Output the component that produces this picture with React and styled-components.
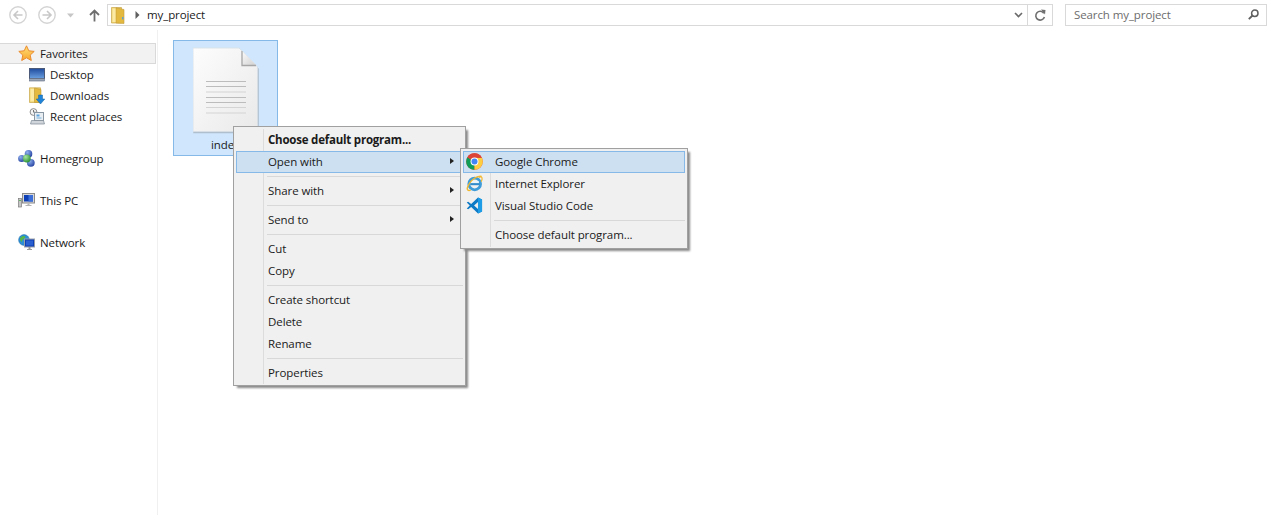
import React from "react";
import styled, { createGlobalStyle } from "styled-components";

const Global = createGlobalStyle`
  html, body { margin: 0; padding: 0; background: #fff; overflow: hidden; }
  body { font-family: "Open Sans", "Noto Sans", "Liberation Sans", sans-serif; font-size: 11.5px; color: #1a1a1a; letter-spacing: -0.1px; }
  * { box-sizing: border-box; }
`;

const Window = styled.div`
  width: 1278px;
  height: 515px;
  display: flex;
  flex-direction: column;
  overflow: hidden;
`;
const Toolbar = styled.div`
  height: 30px;
  flex: none;
  display: flex;
  align-items: flex-start;
  padding: 4px 11px 0 9px;
`;
const NavIcons = styled.div`
  display: flex;
  align-items: center;
  width: 98px;
  height: 22px;
  flex: none;
`;
const NavSlot = styled.span`
  width: ${p => p.$w}px;
  flex: none;
  display: flex;
  align-items: center;
`;
const AddressBar = styled.div`
  width: 946px;
  height: 22px;
  flex: none;
  border: 1px solid #d9d9d9;
  display: flex;
  align-items: center;
`;
const Crumb = styled.span`
  margin-left: 7px;
  flex: 1;
  line-height: 20px;
`;
const AddressEnd = styled.div`
  width: 25px;
  height: 20px;
  flex: none;
  border-left: 1px solid #d9d9d9;
  display: flex;
  align-items: center;
  justify-content: center;
`;
const SearchBox = styled.div`
  width: 202px;
  height: 22px;
  flex: none;
  margin-left: 12px;
  border: 1px solid #d9d9d9;
  display: flex;
  align-items: center;
  justify-content: space-between;
  padding: 0 7px 2px 8px;
  color: #6d6d6d;
`;
const Body = styled.div`
  flex: 1;
  display: flex;
  min-height: 0;
`;
const Sidebar = styled.nav`
  width: 158px;
  flex: none;
  border-right: 1px solid #f0f0f0;
  padding-top: 13px;
  display: flex;
  flex-direction: column;
  gap: 21px;
`;
const NavGroup = styled.div`
  display: flex;
  flex-direction: column;
`;
const NavRow = styled.div`
  height: 21px;
  width: 156px;
  display: flex;
  align-items: center;
  padding-left: ${p => (p.$sub ? 29 : 18)}px;
  background: ${p => (p.$active ? "#f2f2f2" : "transparent")};
  border: 1px solid ${p => (p.$active ? "#d9d9d9" : "transparent")};
  border-left: 0;
  white-space: nowrap;
`;
const NavIconBox = styled.span`
  width: ${p => (p.$sub ? 21 : 22)}px;
  flex: none;
  display: flex;
  align-items: center;
`;
const Content = styled.main`
  flex: 1;
  position: relative;
  padding: 10px 15px;
`;
const FileTile = styled.div`
  width: 105px;
  height: 116px;
  background: #cfe6fc;
  border: 1px solid #84b9e8;
  display: flex;
  flex-direction: column;
  align-items: center;
  padding-top: 6px;
  gap: 3px;
`;
const FileName = styled.span`
  line-height: 16px;
`;
const Menu = styled.div`
  position: absolute;
  left: ${p => p.$left}px;
  top: ${p => p.$top}px;
  width: ${p => p.$width}px;
  background: #f0f0f0;
  border: 1px solid #a0a0a0;
  box-shadow: 3px 3px 2px -1px #8a8a8a;
  padding: 2px 2px ${p => p.$bottom}px;
  z-index: ${p => p.$z};
`;
const Gutter = styled.div`
  position: absolute;
  top: 2px;
  bottom: 1px;
  left: 29px;
  width: 1px;
  background: #dcdcdc;
`;
const Item = styled.div`
  height: 22px;
  position: relative;
  display: flex;
  align-items: center;
  padding: 0 0 2px 32px;
  font-weight: ${p => (p.$bold ? 700 : 400)};
  letter-spacing: ${p => (p.$bold ? "-0.22px" : "-0.08px")};
  white-space: nowrap;
  background: ${p => (p.$hover ? "#cde0f1" : "transparent")};
  box-shadow: ${p => (p.$hover ? "inset 0 0 0 1px #86b8e8" : "none")};
`;
const ItemIcon = styled.span`
  position: absolute;
  left: 3px;
  top: 2px;
  width: 17px;
  height: 17px;
  display: flex;
`;
const Caret = styled.span`
  position: absolute;
  right: 9px;
  top: 7px;
  width: 0;
  height: 0;
  border-left: 4px solid #222;
  border-top: 3.5px solid transparent;
  border-bottom: 3.5px solid transparent;
`;
const Sep = styled.div`
  height: 7px;
  position: relative;
  margin-left: 31px;
  &::after {
    content: "";
    position: absolute;
    left: 0;
    right: 0;
    top: 3px;
    height: 1px;
    background: #d8d8d8;
  }
`;
const Glyph = styled.svg`
  flex: none;
  margin-left: ${p => p.$ml || 0}px;
  margin-right: ${p => p.$mr || 0}px;
`;

const Star = () => (
  <Glyph width="17" height="17" viewBox="0 0 17 17">
    <defs><linearGradient id="st" x1="0" y1="0" x2="0" y2="1"><stop offset="0" stopColor="#ffe27a" /><stop offset="1" stopColor="#f8a42c" /></linearGradient></defs>
    <path d="M8.5.8l2.3 5 5.4.6-4 3.7 1.1 5.4-4.8-2.7-4.8 2.7 1.100-5.400-4-3.700 5.400-.6z" fill="url(#st)" stroke="#ea8a2e" strokeWidth="1" strokeLinejoin="round" />
  </Glyph>
);
const Desktop = () => (
  <Glyph width="16" height="14" viewBox="0 0 16 14">
    <defs><linearGradient id="dk" x1="0" y1="0" x2="0" y2="1"><stop offset="0" stopColor="#1e4a9c" /><stop offset="1" stopColor="#6aa0e0" /></linearGradient></defs>
    <rect x=".5" y=".5" width="15" height="10" fill="url(#dk)" stroke="#4a5a78" />
    <rect x=".5" y="10.5" width="15" height="2.5" fill="#9aa5b5" stroke="#5f6b80" strokeWidth=".6" />
  </Glyph>
);
const DownloadFolder = () => (
  <Glyph width="16" height="18" viewBox="0 0 16 18">
    <path d="M.5.8h11v14.700H.5z" fill="#f3d672" stroke="#c9a64a" strokeWidth=".7" />
    <path d="M5.500 1l6.500 1.500v13H5.500z" fill="#e4b93f" stroke="#c09a3c" strokeWidth=".6" />
    <path d="M1.500 1.800H5v12.500H1.500z" fill="#fbeaa6" />
    <path d="M9.500 8h4v4h2.300l-4.300 5-4.300-5h2.300z" fill="#1f84d8" stroke="#17639f" strokeWidth=".5" />
  </Glyph>
);
const Recent = () => (
  <Glyph width="16" height="17" viewBox="0 0 16 17">
    <circle cx="4.500" cy="4" r="3.400" fill="#f4f4f4" stroke="#8b8b8b" />
    <path d="M4.500 2v2.200h2" fill="none" stroke="#555" strokeWidth=".8" />
    <rect x="5.500" y="4.500" width="9" height="8" fill="#e9eef3" stroke="#8895a3" />
    <rect x="7.500" y="6.500" width="3" height="2" fill="#5da3dc" />
    <rect x="7.500" y="9.500" width="5" height="1" fill="#7ab2de" />
    <path d="M2.500 12.500h12l1 3.500h-14z" fill="#cfd5db" stroke="#7d8894" strokeWidth=".7" />
  </Glyph>
);
const Homegroup = () => (
  <Glyph width="17" height="17" viewBox="0 0 17 17">
    <defs>
      <radialGradient id="hb" cx=".35" cy=".3" r=".8"><stop offset="0" stopColor="#8fb0ee" /><stop offset="1" stopColor="#1f3c9c" /></radialGradient>
      <radialGradient id="hg" cx=".35" cy=".3" r=".8"><stop offset="0" stopColor="#a9e6a0" /><stop offset="1" stopColor="#1f8a2c" /></radialGradient>
    </defs>
    <circle cx="3.600" cy="8.500" r="3.500" fill="url(#hb)" />
    <circle cx="10.500" cy="3.900" r="3.800" fill="url(#hb)" />
    <circle cx="12.800" cy="12.800" r="3.900" fill="url(#hb)" />
    <circle cx="8.800" cy="8.500" r="3.900" fill="url(#hg)" />
  </Glyph>
);
const ThisPC = () => (
  <Glyph width="17" height="15" viewBox="0 0 17 15">
    <rect x=".5" y="5.500" width="3" height="8.500" fill="#c6c6c6" stroke="#7c7c7c" strokeWidth=".7" />
    <rect x="1.200" y="7" width="1.600" height="1" fill="#4caf50" />
    <rect x="4.500" y=".5" width="12" height="9.500" fill="#d8d8d8" stroke="#8a8a8a" />
    <rect x="6" y="2" width="9" height="6.500" fill="#0f3fb5" />
    <path d="M10.500 2H15v6.500h-4.500z" fill="#3d6fd8" />
    <path d="M9.500 10.500h2v1.500h2V13h-6v-1h2z" fill="#b3b3b3" />
  </Glyph>
);
const NetworkIcon = () => (
  <Glyph width="17" height="17" viewBox="0 0 17 17">
    <circle cx="6" cy="6" r="5.400" fill="#2d8fd6" stroke="#1b6aa8" strokeWidth=".5" />
    <path d="M2 4c2-2.500 4-2.500 5.500-1.500C7 5 4 5 4 8 2.500 7.500 1.800 6 2 4z" fill="#56b648" />
    <rect x="6.500" y="5" width="10" height="8" fill="#0f3fb5" stroke="#9aa0a8" />
    <rect x="8" y="6.500" width="7" height="5" fill="#2a5fd0" />
    <path d="M10.500 13h2v2H14v1H9v-1h1.500z" fill="#9b9b9b" />
  </Glyph>
);
const NavCircle = ({ flip }) => (
  <Glyph width="18" height="18" viewBox="0 0 18 18">
    <circle cx="9" cy="9" r="8.200" fill="#fff" stroke="#d4d4d4" strokeWidth="1.400" />
    <path d={flip ? "M4.500 9h8M9 5l4 4-4 4" : "M13.500 9h-8M9 5L5 9l4 4"} fill="none" stroke="#c8c8c8" strokeWidth="1.600" />
  </Glyph>
);
const HistoryChevron = () => (
  <Glyph width="7" height="5" viewBox="0 0 7 5">
    <path d="M0 .5h7L3.500 4.500z" fill="#c6c6c6" />
  </Glyph>
);
const UpArrow = () => (
  <Glyph width="11" height="13" viewBox="0 0 11 13">
    <path d="M5.500 12.500V1.500M1 6l4.500-4.500L10 6" fill="none" stroke="#6e6e6e" strokeWidth="1.800" />
  </Glyph>
);
const BigFolder = () => (
  <Glyph $ml={3} width="14" height="17" viewBox="0 0 14 17">
    <path d="M.5.500h10v15.500H.5z" fill="#f3d672" stroke="#c9a64a" strokeWidth=".7" />
    <path d="M5 .8l8 1.700v14L5 16z" fill="#e4b93f" stroke="#c09a3c" strokeWidth=".6" />
    <path d="M1.500 1.500H4.500v13.500h-3z" fill="#fbeaa6" />
    <rect x="11" y="10" width="1.400" height="2.400" fill="#5aa0d8" />
  </Glyph>
);
const CrumbArrow = () => (
  <Glyph $ml={10} width="5" height="8" viewBox="0 0 5 8">
    <path d="M.5 0L4.500 4 .5 8z" fill="#5f5f5f" />
  </Glyph>
);
const DropChevron = () => (
  <Glyph $mr={4} width="9" height="6" viewBox="0 0 9 6">
    <path d="M1 1l3.500 3.500L8 1" fill="none" stroke="#6a6a6a" strokeWidth="1.600" />
  </Glyph>
);
const Refresh = () => (
  <Glyph width="12" height="13" viewBox="0 0 12 13">
    <path d="M9.800 4.200A4.400 4.400 0 1 0 10.400 8" fill="none" stroke="#6f6f6f" strokeWidth="1.600" />
    <path d="M7 .5l4.500.5-.5 4.500z" fill="#6f6f6f" />
  </Glyph>
);
const SearchGlass = () => (
  <Glyph width="11" height="11" viewBox="0 0 11 11">
    <circle cx="6.800" cy="4.200" r="3.200" fill="none" stroke="#5f5f5f" strokeWidth="1.500" />
    <path d="M4.500 6.500L.8 10.200" stroke="#5f5f5f" strokeWidth="1.800" />
  </Glyph>
);
const Doc = () => (
  <Glyph width="66" height="87" viewBox="0 0 66 87">
    <defs>
      <linearGradient id="pg" x1="0" y1="0" x2="1" y2="1"><stop offset="0" stopColor="#fdfdfd" /><stop offset="1" stopColor="#e9e9e9" /></linearGradient>
      <linearGradient id="fd" x1="0" y1="0" x2="1" y2="1"><stop offset="0" stopColor="#fbfbfb" /><stop offset="1" stopColor="#d0d0d0" /></linearGradient>
    </defs>
    <path d="M0 1.500h46c3 3 17 16 19.500 19.500v64.500H0z" fill="#8f979e" opacity=".5" transform="translate(.3 .7)" />
    <path d="M0 1h46c3 3 16.500 16 18.500 19v64.500H0z" fill="url(#pg)" stroke="#d8e0e6" strokeWidth=".8" />
    <path d="M49 4v14.500h14z" fill="url(#fd)" />
    <path d="M49 4v14.500h14" fill="none" stroke="#a6a6a6" strokeWidth="1.300" />
    {[34, 39, 44.500, 50, 55, 60, 65.500].map((y, i) => (
      <rect key={y} x="13" y={y} width="40" height="1" fill={i % 3 === 2 || i === 6 ? "#d4d4d4" : "#bcbcbc"} />
    ))}
  </Glyph>
);
const Chrome = () => (
  <Glyph width="17" height="17" viewBox="0 0 18 18">
    <circle cx="9" cy="9" r="8.800" fill="#db4437" />
    <path d="M9 9L1.400 4.600 A8.800 8.800 0 0 0 9 17.800z" fill="#0f9d58" />
    <path d="M9 9V17.800 A8.800 8.800 0 0 0 16.800 5H9z" fill="#ffcd40" />
    <path d="M5 7 L1.400 4.600 A8.800 8.800 0 0 1 16.800 5H9z" fill="#db4437" />
    <circle cx="9" cy="9" r="4.200" fill="#fff" />
    <circle cx="9" cy="9" r="3.200" fill="#4285f4" />
  </Glyph>
);
const IE = () => (
  <Glyph width="17" height="17" viewBox="0 0 18 18">
    <circle cx="9.200" cy="9.500" r="6.200" fill="none" stroke="#3d9bd8" strokeWidth="3" />
    <path d="M4.500 8.600h10v2.200h-10z" fill="#2f8bcb" />
    <path d="M5.500 6.300h8v2h-8z" fill="#eaf5fc" />
    <path d="M16.500 1.500C12 .5 4 5 1.500 13.500c-.5 2 .5 3.500 3.500 2.500" fill="none" stroke="#f0b72f" strokeWidth="1.500" />
    <path d="M13.500 2.500c2.500-1 3.800-.6 3.500 2-.1.800-.5 1.700-1 2.500" fill="none" stroke="#f0b72f" strokeWidth="1.300" />
  </Glyph>
);
const VSCode = () => (
  <Glyph width="17" height="17" viewBox="0 0 18 18">
    <path d="M12.700.6L17 2.600v12.800l-4.300 2L5.500 10.500 2.300 13 .8 12.200 4 9 .8 5.800 2.300 5l3.200 2.500zM12.700 5.200L8.500 9l4.200 3.800z" fill="#0f7ac6" fillRule="evenodd" />
    <path d="M12.700.6L17 2.600v12.800l-4.300 2V12.800L12.700 5.200z" fill="#1e9de6" />
  </Glyph>
);

const mainItems = [
  { label: "Choose default program...", bold: true },
  { label: "Open with", hover: true, caret: true },
  "sep",
  { label: "Share with", caret: true },
  "sep",
  { label: "Send to", caret: true },
  "sep",
  { label: "Cut" },
  { label: "Copy" },
  "sep",
  { label: "Create shortcut" },
  { label: "Delete" },
  { label: "Rename" },
  "sep",
  { label: "Properties" },
];
const subItems = [
  { label: "Google Chrome", hover: true, icon: <Chrome /> },
  { label: "Internet Explorer", icon: <IE /> },
  { label: "Visual Studio Code", icon: <VSCode /> },
  "sep",
  { label: "Choose default program..." },
];

const MenuList = ({ items }) =>
  items.map((it, i) =>
    it === "sep" ? (
      <Sep key={i} />
    ) : (
      <Item key={it.label} $bold={it.bold} $hover={it.hover}>
        {it.icon && <ItemIcon>{it.icon}</ItemIcon>}
        {it.label}
        {it.caret && <Caret />}
      </Item>
    )
  );

export default function App() {
  return (
    <Window>
      <Global />
      <Toolbar>
        <NavIcons>
          <NavSlot $w={29}><NavCircle /></NavSlot>
          <NavSlot $w={29}><NavCircle flip /></NavSlot>
          <NavSlot $w={22}><HistoryChevron /></NavSlot>
          <NavSlot $w={18}><UpArrow /></NavSlot>
        </NavIcons>
        <AddressBar>
          <BigFolder />
          <CrumbArrow />
          <Crumb>my_project</Crumb>
          <DropChevron />
          <AddressEnd><Refresh /></AddressEnd>
        </AddressBar>
        <SearchBox>
          Search my_project
          <SearchGlass />
        </SearchBox>
      </Toolbar>
      <Body>
        <Sidebar>
          <NavGroup>
            <NavRow $active><NavIconBox><Star /></NavIconBox>Favorites</NavRow>
            <NavRow $sub><NavIconBox $sub><Desktop /></NavIconBox>Desktop</NavRow>
            <NavRow $sub><NavIconBox $sub><DownloadFolder /></NavIconBox>Downloads</NavRow>
            <NavRow $sub><NavIconBox $sub><Recent /></NavIconBox>Recent places</NavRow>
          </NavGroup>
          <NavRow><NavIconBox><Homegroup /></NavIconBox>Homegroup</NavRow>
          <NavRow><NavIconBox><ThisPC /></NavIconBox>This PC</NavRow>
          <NavRow><NavIconBox><NetworkIcon /></NavIconBox>Network</NavRow>
        </Sidebar>
        <Content>
          <FileTile>
            <Doc />
            <FileName>index</FileName>
          </FileTile>
          <Menu $left={75} $top={96} $width={233} $z={2} $bottom={1}>
            <Gutter />
            <MenuList items={mainItems} />
          </Menu>
          <Menu $left={302} $top={118} $width={228} $z={3} $bottom={2}>
            <Gutter />
            <MenuList items={subItems} />
          </Menu>
        </Content>
      </Body>
    </Window>
  );
}
